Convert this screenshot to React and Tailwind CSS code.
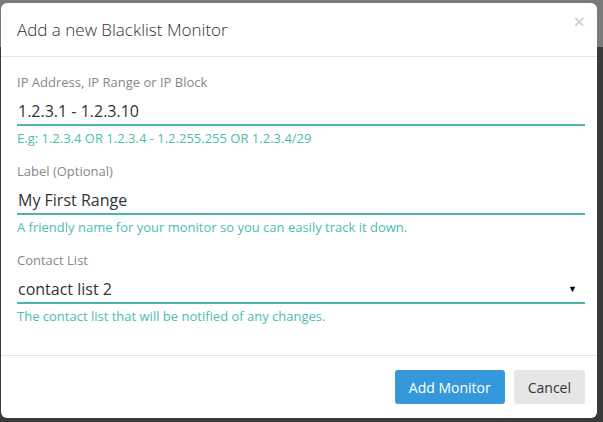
export default function App() {
  return (
    <div
      className="relative h-[422px] w-[603px] overflow-hidden bg-[linear-gradient(to_bottom,#7a7a7a_47px,#3a3a3a_47px)] pt-[3px] pl-[1px]"
      style={{ fontFamily: '"Open Sans", "Liberation Sans", sans-serif' }}
    >
      <div className="flex h-[415px] w-[596px] flex-col rounded-[6px] bg-white">
        <div className="relative flex h-[54px] shrink-0 items-center border-b border-[#e5e5e5] px-[16px]">
          <h4 className="text-[17px] font-light text-[#333]">Add a new Blacklist Monitor</h4>
          <button className="absolute right-[12px] top-[9px] text-[20px] leading-none text-[#c8c8c8]">
            ×
          </button>
        </div>

        <div className="flex flex-1 flex-col pl-[16px] pr-[12px] pt-[16px]">
          <Field
            label="IP Address, IP Range or IP Block"
            value="1.2.3.1 - 1.2.3.10"
            help="E.g: 1.2.3.4 OR 1.2.3.4 - 1.2.255.255 OR 1.2.3.4/29"
          />
          <Field
            label="Label (Optional)"
            value="My First Range"
            help="A friendly name for your monitor so you can easily track it down."
          />
          <Field
            label="Contact List"
            value="contact list 2"
            help="The contact list that will be notified of any changes."
            select
          />
        </div>

        <div className="flex h-[63px] shrink-0 items-center justify-end gap-[9px] border-t border-[#e5e5e5] px-[12px]">
          <button className="h-[34px] rounded-[3px] bg-[#3498db] px-[14px] text-[14px] text-white">
            Add Monitor
          </button>
          <button className="h-[34px] rounded-[3px] bg-[#e6e6e6] px-[14px] text-[14px] text-[#333]">
            Cancel
          </button>
        </div>
      </div>
    </div>
  );
}

function Field({ label, value, help, select }) {
  return (
    <div className="mb-[15px]">
      <div className="text-[13px] leading-[18px] text-[#888]">{label}</div>
      <div className="mt-[8px] flex items-center justify-between border-b-2 border-[#4db6ac] pb-[1px] pl-[1px]">
        <span className="text-[16px] leading-[24px] text-[#333]">{value}</span>
        {select && <span className="mr-[8px] text-[9px] text-black">▼</span>}
      </div>
      <div className="mt-[3px] text-[13px] leading-[18px] text-[#4dbdb0]">{help}</div>
    </div>
  );
}
